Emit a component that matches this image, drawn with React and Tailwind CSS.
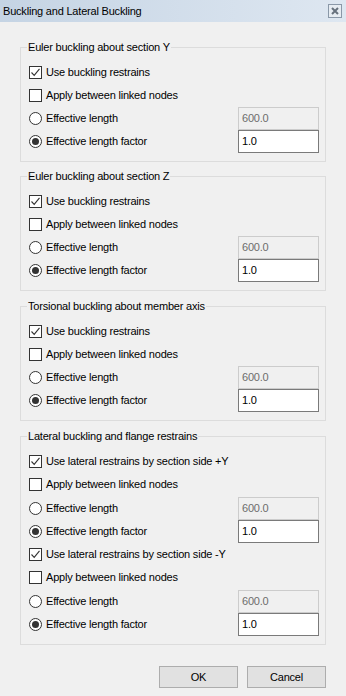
import React from "react";

const font = { fontFamily: '"Liberation Sans", Arial, sans-serif' };

function CheckBox({ checked }) {
  return (
    <span className="w-[13px] h-[13px] border border-[#333333] bg-white flex items-center justify-center shrink-0">
      {checked && (
        <svg width="11" height="11" viewBox="0 0 11 11">
          <path d="M1.5 5.5 L4.2 8.3 L9.5 1.8" fill="none" stroke="#333333" strokeWidth="1.1" />
        </svg>
      )}
    </span>
  );
}

function Radio({ checked }) {
  return (
    <span className="w-[13px] h-[13px] rounded-full border border-[#333333] bg-white flex items-center justify-center shrink-0">
      {checked && <span className="w-[7px] h-[7px] rounded-full bg-[#333333]" />}
    </span>
  );
}

function Row({ type, checked, label, input, className }) {
  return (
    <div className={"flex items-center justify-between h-[23px] " + (className || "")}>
      <div className="flex items-center gap-[4px]">
        {type === "check" ? <CheckBox checked={checked} /> : <Radio checked={checked} />}
        <span className="text-[11px] tracking-[-0.2px] text-black whitespace-nowrap">{label}</span>
      </div>
      {input === "disabled" && (
        <div className="w-[81px] h-[23px] border border-[#cccccc] bg-[#f0f0f0] flex items-center pl-[3px] text-[11px] tracking-[-0.2px] text-[#6d6d6d]">
          600.0
        </div>
      )}
      {input === "enabled" && (
        <div className="w-[81px] h-[23px] border border-[#7a7a7a] bg-white flex items-center pl-[3px] text-[11px] tracking-[-0.2px] text-black">
          1.0
        </div>
      )}
    </div>
  );
}

function StdRows({ first, shift }) {
  return (
    <>
      <Row type="check" checked label={first} />
      <Row type="check" label="Apply between linked nodes" />
      <Row type="radio" label="Effective length" input="disabled" className={shift ? "mt-[1px]" : ""} />
      <Row type="radio" checked label="Effective length factor" input="enabled" />
    </>
  );
}

function Group({ title, children, className }) {
  return (
    <fieldset className={"border border-[#dcdcdc] pl-[8px] pr-[6px] pt-[6px] " + (className || "pb-[8px]")}>
      <legend className="text-[11px] tracking-[-0.2px] leading-[16px] text-black px-[1px] -ml-[2px]">{title}</legend>
      <div className="flex flex-col">{children}</div>
    </fieldset>
  );
}

export default function App() {
  return (
    <div className="w-[346px] h-[696px] bg-[#f0f0f0] flex flex-col overflow-hidden" style={font}>
      <div className="h-[22px] shrink-0 flex items-center justify-between pl-[3px] pr-[4px] bg-gradient-to-r from-[#c5d4e4] to-[#dee7f1]">
        <span className="text-[11px] tracking-[-0.2px] text-black">Buckling and Lateral Buckling</span>
        <span className="w-[14px] h-[14px] border border-[#8a98a8] bg-[#e6ecf2] flex items-center justify-center">
          <svg width="8" height="8" viewBox="0 0 8 8">
            <path d="M1 1 L7 7 M7 1 L1 7" stroke="#66717d" strokeWidth="2" />
          </svg>
        </span>
      </div>
      <div className="flex flex-col px-[20px] pt-[17px] gap-[6px]">
        <Group title="Euler buckling about section Y">
          <StdRows first="Use buckling restrains" />
        </Group>
        <Group title="Euler buckling about section Z">
          <StdRows first="Use buckling restrains" />
        </Group>
        <Group title="Torsional buckling about member axis" className="mt-[1px] pb-[8px]">
          <StdRows first="Use buckling restrains" />
        </Group>
        <Group title="Lateral buckling and flange restrains" className="mt-[1px] pb-[8px]">
          <StdRows first="Use lateral restrains by section side +Y" shift />
          <StdRows first="Use lateral restrains by section side -Y" shift />
        </Group>
      </div>
      <div className="flex justify-end gap-[9px] pr-[20px] mt-[21px]">
        <button className="w-[79px] h-[22px] border border-[#adadad] bg-[#e1e1e1] text-[11px] tracking-[-0.2px] text-black">OK</button>
        <button className="w-[79px] h-[22px] border border-[#adadad] bg-[#e1e1e1] text-[11px] tracking-[-0.2px] text-black">Cancel</button>
      </div>
    </div>
  );
}
